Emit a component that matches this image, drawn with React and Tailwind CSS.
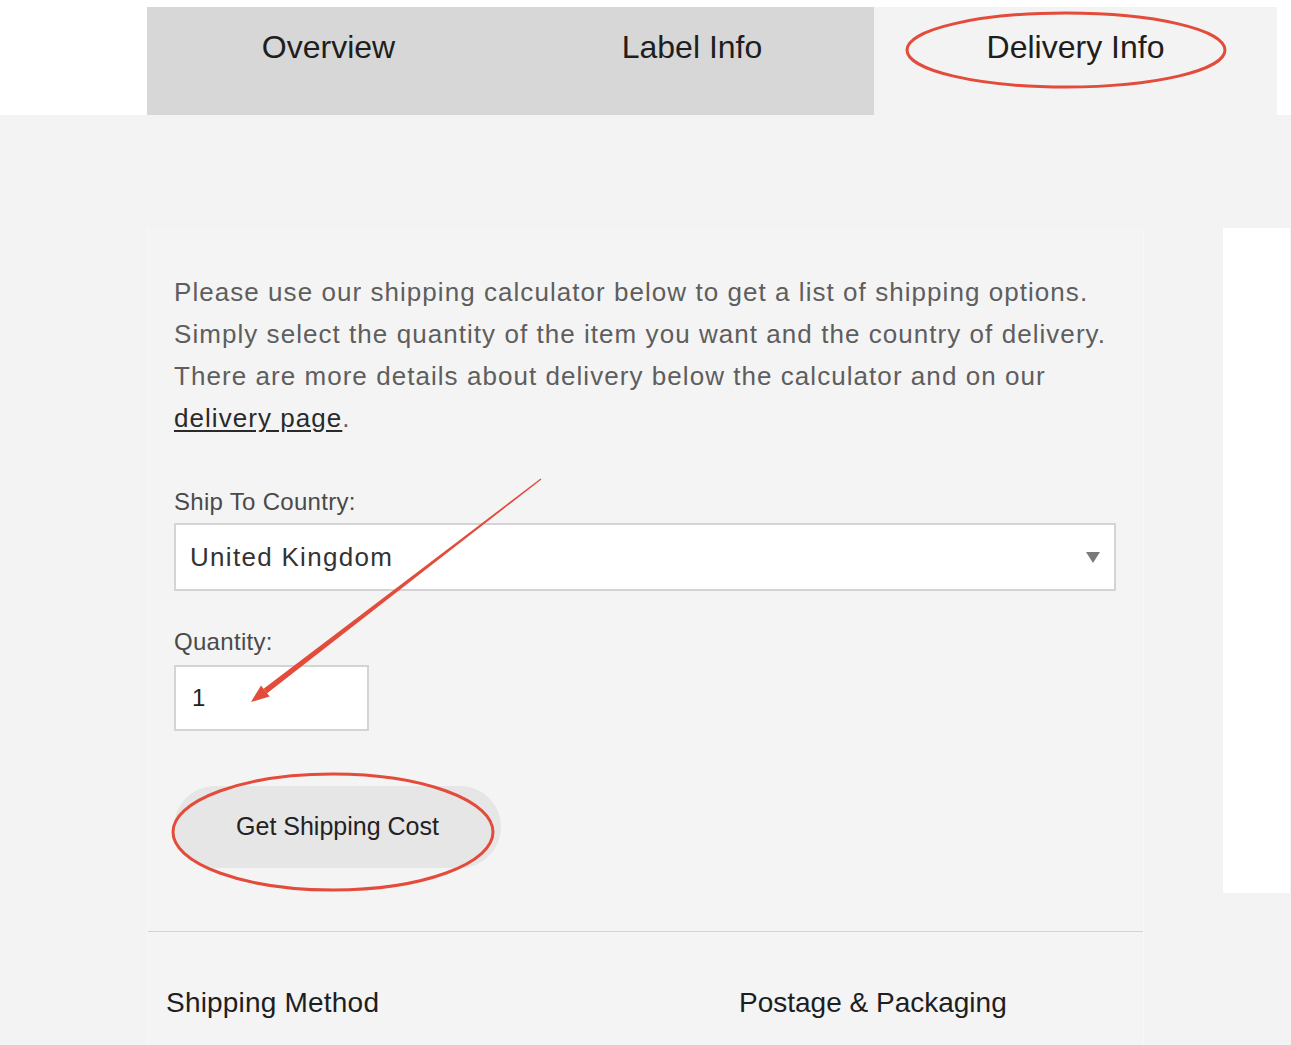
import React from 'react';

const font = { fontFamily: '"Liberation Sans", Arial, sans-serif' };

function Tabs() {
  return (
    <div className="flex h-[115px] bg-white">
      <div className="w-[147px] shrink-0" />
      <div className="mt-[7px] flex h-[108px]">
        <div className="w-[363px] bg-[#d7d7d7] pt-[22px] text-center text-[32px] leading-[36px] text-[#1e1e1e]">
          Overview
        </div>
        <div className="w-[364px] bg-[#d7d7d7] pt-[22px] text-center text-[32px] leading-[36px] text-[#1e1e1e]">
          Label Info
        </div>
        <div className="w-[403px] bg-[#f3f3f3] pt-[22px] text-center text-[32px] leading-[36px] text-[#1e1e1e]">
          Delivery Info
        </div>
      </div>
    </div>
  );
}

function Calculator() {
  return (
    <div className="w-[997px] shrink-0 border-x border-[#f7f7f7] bg-[#f4f4f4]">
      <div className="px-[26px] pt-[43px] pb-[63px] border-b border-[#d2d2d2]">
        <p className="text-[26px] leading-[42px] tracking-[1.05px] text-[#5e5e5e]">
          Please use our shipping calculator below to get a list of shipping options.
          <br />
          Simply select the quantity of the item you want and the country of delivery.
          <br />
          There are more details about delivery below the calculator and on our
          <br />
          <a href="#" className="text-[#2a2a2a] underline underline-offset-[3px]">delivery page</a>.
        </p>

        <label className="mt-[48px] block text-[24px] leading-[30px] tracking-[0.3px] text-[#4a4a4a]">Ship To Country:</label>
        <div className="mt-[6px] flex h-[68px] w-[942px] items-center justify-between border-2 border-[#d4d4d4] bg-white pl-[14px] pr-[14px]">
          <span className="text-[26px] tracking-[1.3px] text-[#333]">United Kingdom</span>
          <svg width="14" height="11" viewBox="0 0 14 11">
            <path d="M0 0h14L7 11z" fill="#7a7a7a" />
          </svg>
        </div>

        <label className="mt-[36px] block text-[24px] leading-[30px] tracking-[0.3px] text-[#4a4a4a]">Quantity:</label>
        <div className="mt-[8px] flex h-[66px] w-[195px] items-center border-2 border-[#d4d4d4] bg-white pl-[16px]">
          <span className="text-[24px] text-[#222]">1</span>
        </div>

        <button className="mt-[55px] flex h-[82px] w-[327px] items-center justify-center rounded-full bg-[#e6e6e6] text-[25px] text-[#222]">
          Get Shipping Cost
        </button>
      </div>

      <div className="flex h-[120px] pl-[18px] pt-[54px] text-[28px] leading-[34px] text-[#1e1e1e]">
        <div className="w-[573px] tracking-[0.2px]">Shipping Method</div>
        <div>Postage &amp; Packaging</div>
      </div>
    </div>
  );
}

function Annotations() {
  return (
    <svg className="pointer-events-none absolute left-0 top-0" width="1291" height="1045" viewBox="0 0 1291 1045">
      <ellipse cx="1066" cy="50" rx="159" ry="37" fill="none" stroke="#e34b3b" strokeWidth="3" />
      <ellipse cx="333" cy="832" rx="160" ry="58" fill="none" stroke="#e34b3b" strokeWidth="3" />
      <polygon points="540.6,478.6 541.4,479.4 266.8,693.4 263.6,688.8" fill="#e34b3b" />
      <polygon points="251,702 269.6,696.6 261,685.4" fill="#e34b3b" />
    </svg>
  );
}

export default function App() {
  return (
    <div className="relative h-[1045px] w-[1291px] overflow-hidden bg-[#f3f3f3]" style={font}>
      <Tabs />
      <div className="flex pl-[147px] pt-[113px]">
        <Calculator />
        <div className="ml-[79px] h-[665px] w-[67px] shrink-0 bg-white" />
      </div>
      <Annotations />
    </div>
  );
}
